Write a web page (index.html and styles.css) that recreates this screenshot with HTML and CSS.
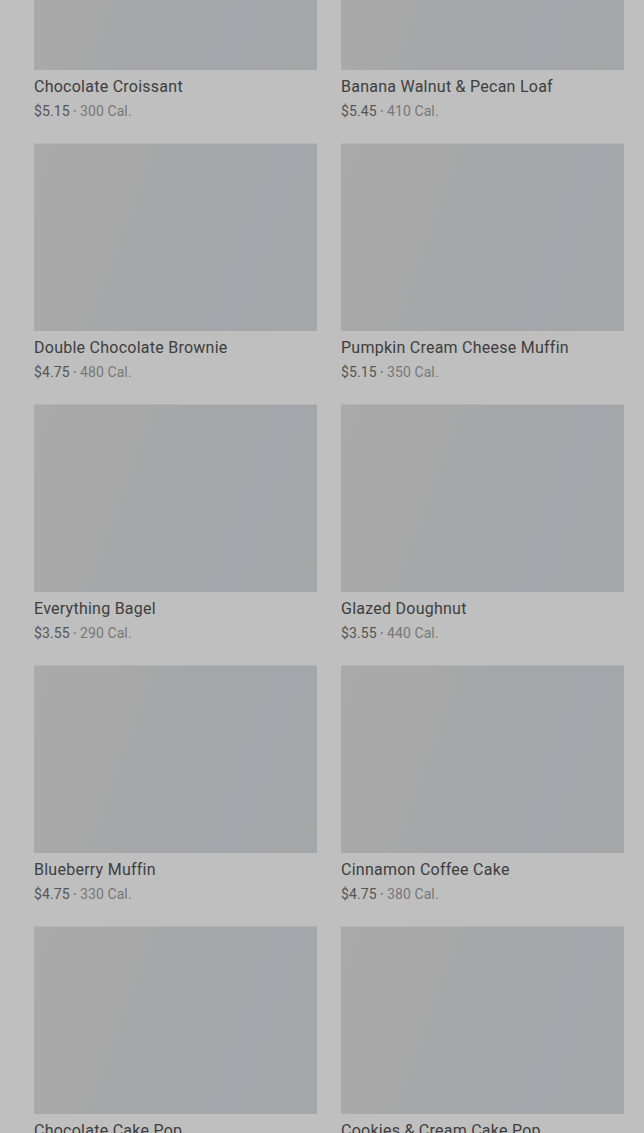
FILE: index.html
```html
<!DOCTYPE html>
<html lang="en">
<head>
  <meta charset="UTF-8">
  <meta name="viewport" content="width=device-width, initial-scale=1.0">
  <title>Bakery</title>
  <link rel="stylesheet" href="styles.css">
</head>
<body>

  <main class="menu-grid">
    <div class="product">
      <div class="product-img"></div>
      <h3 class="product-name">Chocolate Croissant</h3>
      <p class="product-meta">$5.15 <span class="dot">•</span> <span class="cal">300 Cal.</span></p>
    </div>
    <div class="product">
      <div class="product-img"></div>
      <h3 class="product-name">Banana Walnut &amp; Pecan Loaf</h3>
      <p class="product-meta">$5.45 <span class="dot">•</span> <span class="cal">410 Cal.</span></p>
    </div>
    <div class="product">
      <div class="product-img"></div>
      <h3 class="product-name">Double Chocolate Brownie</h3>
      <p class="product-meta">$4.75 <span class="dot">•</span> <span class="cal">480 Cal.</span></p>
    </div>
    <div class="product">
      <div class="product-img"></div>
      <h3 class="product-name">Pumpkin Cream Cheese Muffin</h3>
      <p class="product-meta">$5.15 <span class="dot">•</span> <span class="cal">350 Cal.</span></p>
    </div>
    <div class="product">
      <div class="product-img"></div>
      <h3 class="product-name">Everything Bagel</h3>
      <p class="product-meta">$3.55 <span class="dot">•</span> <span class="cal">290 Cal.</span></p>
    </div>
    <div class="product">
      <div class="product-img"></div>
      <h3 class="product-name">Glazed Doughnut</h3>
      <p class="product-meta">$3.55 <span class="dot">•</span> <span class="cal">440 Cal.</span></p>
    </div>
    <div class="product">
      <div class="product-img"></div>
      <h3 class="product-name">Blueberry Muffin</h3>
      <p class="product-meta">$4.75 <span class="dot">•</span> <span class="cal">330 Cal.</span></p>
    </div>
    <div class="product">
      <div class="product-img"></div>
      <h3 class="product-name">Cinnamon Coffee Cake</h3>
      <p class="product-meta">$4.75 <span class="dot">•</span> <span class="cal">380 Cal.</span></p>
    </div>
    <div class="product">
      <div class="product-img"></div>
      <h3 class="product-name">Chocolate Cake Pop</h3>
      <p class="product-meta">$3.25 <span class="dot">•</span> <span class="cal">160 Cal.</span></p>
    </div>
    <div class="product">
      <div class="product-img"></div>
      <h3 class="product-name">Cookies &amp; Cream Cake Pop</h3>
      <p class="product-meta">$3.25 <span class="dot">•</span> <span class="cal">170 Cal.</span></p>
    </div>
  </main>

</body>
</html>
```

FILE: styles.css
```css
/* Estilos generales */
body {
  margin: 0;
  padding: 0;
  font-family: 'Roboto', 'Liberation Sans', sans-serif;
  background: #bfbfbf;
  color: #444;
  overflow: hidden;
}

/* Grid de productos, desplazado como si la página tuviera scroll */
.menu-grid {
  display: grid;
  grid-template-columns: 283px 283px;
  column-gap: 24px;
  padding: 0 20px 0 34px;
  margin-top: -118px;
}

.product {
  height: 261px;
}

/* Imagen placeholder con brillo diagonal */
.product-img {
  height: 188px;
  background: linear-gradient(110deg, #aaaaaa 0%, #a8a8a8 30%, #a4a6a9 45%, #a3a6aa 75%, #a5a6a8 100%);
  border-top: 1px solid #b3b4b6;
  box-sizing: border-box;
}

.product-name {
  margin: 6px 0 0;
  font-size: 16px;
  font-weight: 400;
  line-height: 22px;
  letter-spacing: 0.25px;
  color: #3e3e3e;
}

.product-meta {
  margin: 3px 0 0;
  font-size: 14px;
  line-height: 20px;
  letter-spacing: 0.1px;
  color: #555;
}

.product-meta .dot {
  font-size: 9px;
  color: #777;
  vertical-align: 2px;
}

.product-meta .cal {
  color: #777;
}
```
